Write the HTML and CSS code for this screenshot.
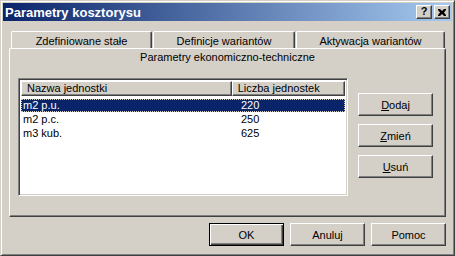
FILE: index.html
```html
<!DOCTYPE html>
<html lang="pl">
<head>
    <meta charset="UTF-8">
    <title>Parametry kosztorysu</title>
    <link rel="stylesheet" href="styles.css">
</head>
<body>
    <div class="window">
        <div class="titlebar">
            <span class="title">Parametry kosztorysu</span>
            <div class="caption-btns">
                <div class="cap cap-help">?</div>
                <div class="cap">
                    <svg width="8" height="7" viewBox="0 0 8 7">
                        <path d="M0 0h2l2 2 2-2h2v1l-2 2.5 2 2.5v1h-2l-2-2-2 2h-2v-1l2-2.5-2-2.5z" fill="#000"/>
                    </svg>
                </div>
            </div>
        </div>

        <div class="client">
            <div class="tabs">
                <div class="tab t1">Zdefiniowane stałe</div>
                <div class="tab t2">Definicje wariantów</div>
                <div class="tab t3">Aktywacja wariantów</div>
            </div>

            <div class="page">
                <div class="page-title">Parametry ekonomiczno-techniczne</div>
                <div class="page-body">
                    <div class="listview">
                        <div class="lv-head">
                            <div class="lv-col c1">Nazwa jednostki</div>
                            <div class="lv-col c2">Liczba jednostek</div>
                        </div>
                        <div class="lv-row selected">
                            <span class="c1">m2 p.u.</span>
                            <span class="c2">220</span>
                        </div>
                        <div class="lv-row">
                            <span class="c1">m2 p.c.</span>
                            <span class="c2">250</span>
                        </div>
                        <div class="lv-row">
                            <span class="c1">m3 kub.</span>
                            <span class="c2">625</span>
                        </div>
                    </div>

                    <div class="side-btns">
                        <div class="btn"><u>D</u>odaj</div>
                        <div class="btn"><u>Z</u>mień</div>
                        <div class="btn"><u>U</u>suń</div>
                    </div>
                </div>
            </div>

            <div class="dialog-btns">
                <div class="btn default">OK</div>
                <div class="btn">Anuluj</div>
                <div class="btn">Pomoc</div>
            </div>
        </div>
    </div>
</body>
</html>
```

FILE: styles.css
```css
html, body {
    margin: 0;
    padding: 0;
    background-color: #d4d0c8;
}

body {
    font-family: "Liberation Sans", Arial, sans-serif;
    font-size: 11px;
    color: #000;
}

.window {
    box-sizing: border-box;
    width: 455px;
    height: 256px;
    padding: 2px;
    border: 1px solid;
    border-color: #d4d0c8 #404040 #404040 #d4d0c8;
    box-shadow: inset 1px 1px #fff, inset -1px -1px #808080;
    background-color: #d4d0c8;
}

.titlebar {
    height: 18px;
    display: flex;
    align-items: center;
    justify-content: space-between;
    padding: 0 2px 0 2px;
    background: linear-gradient(to right, #0a246a, #a6caf0);
}

.title {
    color: #fff;
    font-weight: bold;
    font-size: 13px;
}

.caption-btns {
    display: flex;
    gap: 2px;
}

.cap {
    box-sizing: border-box;
    width: 16px;
    height: 14px;
    display: flex;
    align-items: center;
    justify-content: center;
    background-color: #d4d0c8;
    border: 1px solid;
    border-color: #fff #404040 #404040 #fff;
    box-shadow: inset -1px -1px #808080;
}

.cap-help {
    font-weight: bold;
    font-size: 11px;
    line-height: 1;
    padding-bottom: 1px;
}

.client {
    padding: 10px 6px 0 6px;
}

.tabs {
    display: flex;
    height: 17px;
    padding-left: 2px;
}

.tab {
    box-sizing: border-box;
    height: 17px;
    padding-top: 3px;
    text-align: center;
    border-top: 1px solid #fff;
    border-left: 1px solid #fff;
    border-right: 1px solid #404040;
    border-radius: 2px 2px 0 0;
    box-shadow: inset -1px 0 #808080;
}

.t1 { width: 141px; }
.t2 { width: 142px; margin-left: 1px; }
.t3 { width: 149px; margin-left: 1px; }

.page {
    box-sizing: border-box;
    height: 169px;
    border: 1px solid;
    border-color: #fff #404040 #404040 #fff;
    border-radius: 2px 2px 0 0;
    box-shadow: inset -1px -1px #808080;
}

.page-title {
    height: 29px;
    padding-top: 2px;
    box-sizing: border-box;
    text-align: center;
}

.page-body {
    display: flex;
    padding-left: 8px;
}

.listview {
    box-sizing: border-box;
    width: 330px;
    height: 118px;
    padding: 2px;
    background-color: #fff;
    border: 1px solid;
    border-color: #808080 #fff #fff #808080;
    box-shadow: inset 1px 1px #404040, inset -1px -1px #d4d0c8;
}

.lv-head {
    display: flex;
    height: 15px;
}

.lv-col {
    box-sizing: border-box;
    height: 15px;
    padding-left: 5px;
    line-height: 13px;
    background-color: #d4d0c8;
    border: 1px solid;
    border-color: #fff #404040 #404040 #fff;
    box-shadow: inset -1px -1px #808080;
}

.lv-col.c1 { width: 212px; }
.lv-col.c2 { width: 114px; }

.lv-row {
    display: flex;
    height: 13px;
    line-height: 13px;
    margin-top: 1px;
}

.lv-row.selected {
    margin-top: 3px;
    background-color: #0a246a;
    color: #fff;
    outline: 1px dotted #d4d0c8;
    outline-offset: -1px;
}

.lv-row .c1 {
    width: 212px;
    padding-left: 2px;
}

.lv-row .c2 {
    padding-left: 6px;
}

.side-btns {
    display: flex;
    flex-direction: column;
    gap: 8px;
    margin-left: 10px;
    padding-top: 15px;
}

.btn {
    box-sizing: border-box;
    width: 75px;
    height: 23px;
    display: flex;
    align-items: center;
    justify-content: center;
    background-color: #d4d0c8;
    border: 1px solid;
    border-color: #fff #404040 #404040 #fff;
    box-shadow: inset -1px -1px #808080;
}

.btn.default {
    border: 1px solid #000;
    box-shadow: inset 1px 1px #fff, inset -1px -1px #404040, inset -2px -2px #808080;
}

.dialog-btns {
    display: flex;
    justify-content: flex-end;
    gap: 6px;
    margin-top: 6px;
}
```
